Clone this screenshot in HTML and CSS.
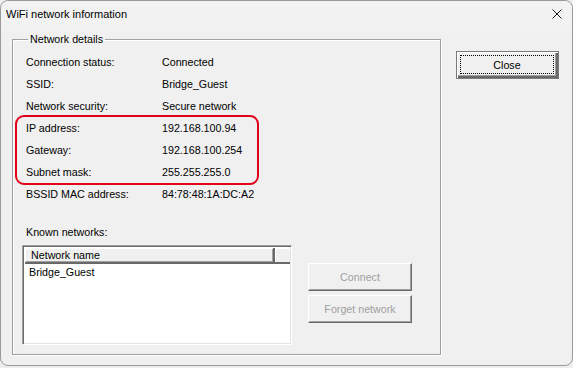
FILE: index.html
```html
<!DOCTYPE html>
<html>
<head>
<meta charset="utf-8">
<link rel="stylesheet" href="styles.css">
</head>
<body>
<div class="window">
  <div class="titlebar">
    <span class="title">WiFi network information</span>
    <svg class="x" width="10" height="10" viewBox="0 0 10 10"><path d="M0.5 0.5 L9.5 9.5 M9.5 0.5 L0.5 9.5" stroke="#1a1a1a" stroke-width="1" fill="none"/></svg>
  </div>
  <div class="client">
    <fieldset class="group">
      <legend>Network details</legend>
      <div class="details">
        <span>Connection status:</span><span>Connected</span>
        <span>SSID:</span><span>Bridge_Guest</span>
        <span>Network security:</span><span>Secure network</span>
        <span>IP address:</span><span>192.168.100.94</span>
        <span>Gateway:</span><span>192.168.100.254</span>
        <span>Subnet mask:</span><span>255.255.255.0</span>
        <span>BSSID MAC address:</span><span>84:78:48:1A:DC:A2</span>
      </div>
      <div class="known-label">Known networks:</div>
      <div class="known">
        <div class="listview">
          <div class="lv-header">
            <div class="lv-col">Network name</div>
            <div class="lv-col lv-rest"></div>
          </div>
          <div class="lv-item">Bridge_Guest</div>
        </div>
        <div class="side-buttons">
          <div class="btn disabled">Connect</div>
          <div class="btn disabled">Forget network</div>
        </div>
      </div>
    </fieldset>
    <div class="btn default"><span class="focus">Close</span></div>
  </div>
  <div class="highlight"></div>
</div>
</body>
</html>
```

FILE: styles.css
```css
html, body {
  margin: 0;
  padding: 0;
  background: #eeeeee;
}
body {
  width: 573px;
  height: 368px;
  overflow: hidden;
  font-family: "Liberation Sans", Arial, sans-serif;
  font-size: 10.7px;
  color: #000;
}
.window {
  position: relative;
  box-sizing: border-box;
  width: 573px;
  height: 366px;
  border: 1px solid #9a9a9a;
  border-radius: 8px;
  background: #f0f0f0;
  display: flex;
  flex-direction: column;
}
.titlebar {
  height: 30px;
  display: flex;
  justify-content: space-between;
  align-items: flex-start;
  padding: 6px 10px 0 5px;
  box-sizing: border-box;
  background: #f2f2f2;
  border-radius: 8px 8px 0 0;
}
.title {
  font-size: 11px;
  line-height: 14px;
}
.x {
  margin-top: 2px;
}
.client {
  display: flex;
  align-items: flex-start;
  padding: 2px 0 0 11px;
  gap: 15px;
}
.group {
  margin: 0;
  padding: 5px 0 9px 9px;
  width: 429px;
  box-sizing: border-box;
  border: 1px solid #a0a0a0;
  box-shadow: 1px 1px 0 #fff, inset 1px 1px 0 #fff;
  min-inline-size: 0;
}
.group legend {
  margin-left: 6px;
  padding: 0 2px;
  line-height: 13px;
  font-size: 10.7px;
}
.details {
  display: grid;
  grid-template-columns: 136px auto;
  grid-auto-rows: 22px;
  line-height: 22px;
  padding-left: 4px;
}
.known-label {
  margin-top: 21px;
  padding-left: 4px;
  line-height: 13px;
}
.known {
  display: flex;
  align-items: flex-start;
  gap: 16px;
  margin-top: 6px;
}
.listview {
  width: 270px;
  height: 100px;
  box-sizing: border-box;
  background: #fff;
  border: 1px solid;
  border-color: #a0a0a0 #fff #fff #a0a0a0;
  box-shadow: inset 1px 1px 0 #696969, inset -1px -1px 0 #e3e3e3;
  padding: 2px 1px 1px 2px;
}
.lv-header {
  display: flex;
  height: 16px;
}
.lv-col {
  box-sizing: border-box;
  width: 250px;
  height: 16px;
  background: #f0f0f0;
  border-right: 2px solid #696969;
  border-bottom: 2px solid #696969;
  box-shadow: inset 1px 1px 0 #fff, inset -1px -1px 0 #a0a0a0;
  padding-left: 6px;
  line-height: 14px;
}
.lv-rest {
  flex: 1;
  border-right: none;
  box-shadow: inset 1px 1px 0 #fff;
}
.lv-item {
  padding-left: 4px;
  line-height: 14px;
  margin-top: 1px;
}
.side-buttons {
  display: flex;
  flex-direction: column;
  gap: 4px;
  margin-top: 18px;
}
.btn {
  box-sizing: border-box;
  width: 104px;
  height: 28px;
  display: flex;
  align-items: center;
  justify-content: center;
  background: #f0f0f0;
  border: 1px solid;
  border-color: #fff #696969 #696969 #fff;
  box-shadow: inset -1px -1px 0 #a0a0a0;
}
.disabled {
  color: #a0a0a0;
}
.default {
  width: 103px;
  margin-top: 18px;
  border: 1px solid #7a7a7a;
  box-shadow: inset 1px 1px 0 #fff, inset -2px -2px 0 #696969, inset -3px -3px 0 #a0a0a0;
  padding: 3px 4px 4px 3px;
  align-items: stretch;
}
.focus {
  flex: 1;
  display: flex;
  align-items: center;
  justify-content: center;
  border: 1px dotted #000;
}
.highlight {
  position: absolute;
  left: 14px;
  top: 114px;
  width: 244px;
  height: 70px;
  box-sizing: border-box;
  border: 2px solid #e3001b;
  border-radius: 9px;
}
```
